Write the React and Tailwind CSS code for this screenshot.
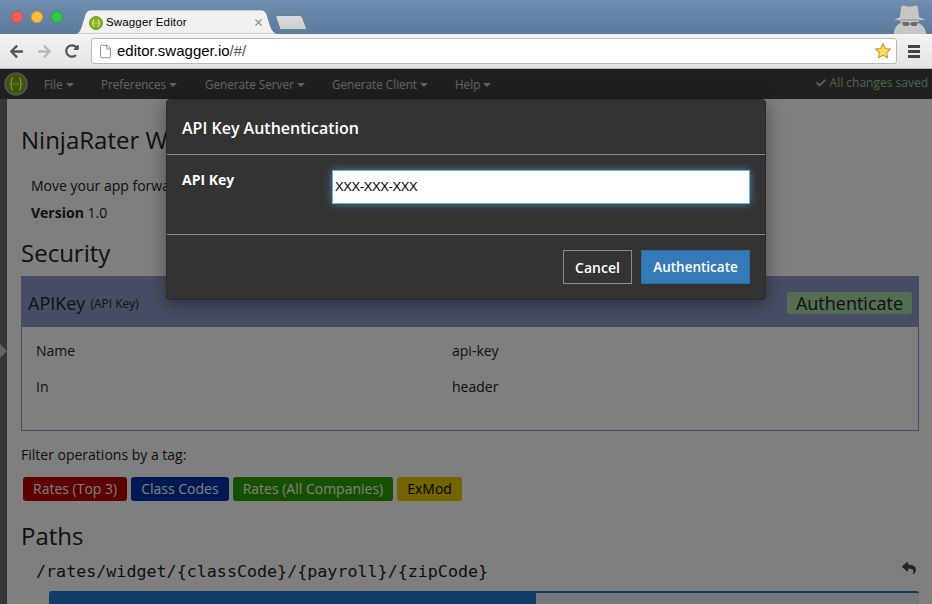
import React from 'react';
import { FaArrowLeft, FaArrowRight, FaCheck, FaReply, FaRedoAlt } from 'react-icons/fa';
import { File, X } from 'lucide-react';

const navItems = ['File', 'Preferences', 'Generate Server', 'Generate Client', 'Help'];
const navWidths = ['w-[57px]', 'w-[104px]', 'w-[127px]', 'w-[123px]', 'w-[60px]'];

const tags = [
    { name: 'Rates (Top 3)', color: 'bg-[#b80000] text-white' },
    { name: 'Class Codes', color: 'bg-[#0030a8] text-white' },
    { name: 'Rates (All Companies)', color: 'bg-[#28a000] text-white' },
    { name: 'ExMod', color: 'bg-[#e8c800] text-black' },
];

const SwaggerLogo = ({ size, ring, fill, text }) => (
    <svg width={size} height={size} viewBox="0 0 24 24">
        <circle cx="12" cy="12" r="11" fill={fill} stroke={ring} strokeWidth="1.6" />
        <path d="M9 6.5c-2 0-1.6 1.8-1.6 3.4 0 1.2-.6 2.1-1.4 2.1.8 0 1.4.9 1.4 2.1 0 1.6-.4 3.4 1.6 3.4M15 6.5c2 0 1.6 1.8 1.6 3.4 0 1.2.6 2.1 1.4 2.1-.8 0-1.4.9-1.4 2.1 0 1.6.4 3.4-1.6 3.4" fill="none" stroke={text} strokeWidth="1.3" />
        <circle cx="10" cy="12" r=".7" fill={text} />
        <circle cx="12" cy="12" r=".7" fill={text} />
        <circle cx="14" cy="12" r=".7" fill={text} />
    </svg>
);

const BrowserChrome = () => (
    <div className="shrink-0 font-['Liberation_Sans',sans-serif]">
        <div className="h-[34px] bg-gradient-to-b from-[#6f8dae] to-[#5b7b9d] flex relative">
            <div className="flex items-center gap-[8px] pl-[11px] h-[34px] w-[74px] pb-[1px]">
                <span className="w-[12px] h-[12px] rounded-full bg-[#fc5b57] border border-[#e0443e]" />
                <span className="w-[12px] h-[12px] rounded-full bg-[#fdbc40] border border-[#dea123]" />
                <span className="w-[12px] h-[12px] rounded-full bg-[#35c84a] border border-[#1aab29]" />
            </div>
            <div className="relative w-[206px] h-[24px] mt-[10px] flex items-center pl-[15px] pt-[1px]">
                <svg className="absolute inset-0" width="206" height="24" viewBox="0 0 206 24">
                    <path d="M0 24c5 0 6-3 8-9l3-10c1-3 3-5 6-5h170c3 0 5 2 6 5l3 10c2 6 4 9 10 9z" fill="#f1f1f1" stroke="#566b80" strokeWidth=".5" />
                </svg>
                <span className="relative mr-[3px]"><SwaggerLogo size={14} ring="#5c8a0c" fill="#84b81c" text="#ffffff" /></span>
                <span className="relative text-[11.5px] text-black tracking-[.15px]">Swagger Editor</span>
                <X className="absolute left-[179px] top-[7px] text-[#8a8a8a]" size={11} strokeWidth={2.5} />
            </div>
            <div className="w-[28px] h-[15px] mt-[15px] ml-[-3px] bg-gradient-to-b from-[#dcdcdc] to-[#cccccc] rounded-t-[3px] skew-x-[20deg] border border-[#6d7f90]" />
            <svg className="absolute right-[5px] top-[4px]" width="34" height="30" viewBox="0 0 34 30">
                <path d="M1 30c0-5 2-9 7-11l-1-3H1l6-3 1-9c0-2 2-3 4-2 3 1 6 1 9 0 2-1 4 0 4 2l1 9 6 3h-6l-1 3c5 2 8 6 8 11z" fill="#c6c6c6" />
                <path d="M8 15h18v2H8z" fill="#a8a8a8" />
                <path d="M9 18h6.500l1 1.500h1l1-1.500H25l-1.500 4h-4.500l-1.500-1.500h-1L15 22h-4.500z" fill="#6b6b6b" />
            </svg>
        </div>
        <div className="h-[35px] bg-gradient-to-b from-[#f4f4f4] to-[#e4e4e4] flex items-center border-b border-[#b5b5b5]">
            <FaArrowLeft className="ml-[9px] text-[#555]" size={15} />
            <FaArrowRight className="ml-[13px] text-[#b9b9b9]" size={15} />
            <FaRedoAlt className="ml-[13px] text-[#555]" size={14} />
            <div className="ml-[12px] w-[806px] h-[26px] bg-white border border-[#b8b8b8] rounded-[3px] flex items-center pl-[6px] pr-[4px]">
                <File className="text-[#888] shrink-0" size={15} strokeWidth={1.5} />
                <span className="ml-[4px] text-[15px] text-black">editor.swagger.io<span className="text-[#555]">/#/</span></span>
                <svg className="ml-auto" width="18" height="18" viewBox="0 0 24 24">
                    <path d="M12 2l3 6.6 7 .8-5.2 4.8 1.4 7L12 17.6l-6.2 3.6 1.4-7L2 9.4l7-.8z" fill="#fbdc68" stroke="#c9962a" strokeWidth="1.4" strokeLinejoin="round" />
                </svg>
            </div>
            <div className="ml-[11px] flex flex-col gap-[2px]">
                <span className="w-[12px] h-[3px] bg-[#444]" />
                <span className="w-[12px] h-[3px] bg-[#444]" />
                <span className="w-[12px] h-[3px] bg-[#444]" />
            </div>
        </div>
    </div>
);

const NavBar = () => (
    <div className="h-[30px] bg-[#414141] flex items-center shrink-0 text-[#c8c8c8] text-[11.7px]">
        <div className="ml-[4px] w-[40px]"><SwaggerLogo size={24} ring="#a8a8a8" fill="#7fb000" text="#ffffff" /></div>
        {navItems.map((item, i) => (
            <div key={item} className={`flex items-center gap-[3px] pt-[2px] ${navWidths[i]}`}>
                {item}
                <span className="w-0 h-0 border-x-[4px] border-x-transparent border-t-[4px] border-t-[#c8c8c8] mt-[1px]" />
            </div>
        ))}
        <div className="ml-auto mr-[4px] flex items-center gap-[4px] text-[#90d090] text-[12px] mb-[2px]">
            <FaCheck size={10} />
            All changes saved
        </div>
    </div>
);

const Sheet = () => (
    <div className="flex-1 flex min-h-0 bg-white text-[#222] text-[14px] font-['Open_Sans',sans-serif]">
        <div className="w-[7px] bg-[#646f76] relative shrink-0">
            <span className="absolute top-[245px] left-0 w-0 h-0 border-y-[7px] border-y-transparent border-l-[7px] border-l-[#c8c8c8]" />
        </div>
        <div className="flex-1 pl-[14px] pr-[13px] pt-[27px] min-w-0">
            <h1 className="text-[24px] leading-[28px] whitespace-nowrap">NinjaRater Widget API</h1>
            <p className="mt-[22px] ml-[10px] leading-[20px] whitespace-nowrap">Move your app forward with the NinjaRater API</p>
            <p className="mt-[7px] ml-[10px] leading-[20px]"><span className="font-bold">Version</span> 1.0</p>
            <h2 className="mt-[16px] text-[24px] leading-[28px]">Security</h2>
            <div className="mt-[9px] border border-[#8f9bc8] h-[155px]">
                <div className="h-[50px] bg-[#8f9bc8] flex items-center pl-[6px] pr-[6px] pt-[2px]">
                    <span className="text-[18px]">APIKey</span>
                    <span className="ml-[5px] text-[12px] mt-[2px]">(API Key)</span>
                    <span className="ml-auto bg-[#a8dca8] rounded-[3px] w-[125px] h-[22px] leading-[22px] text-center text-[18px]">Authenticate</span>
                </div>
                <div className="grid grid-cols-[416px_1fr] pl-[14px] pt-[14px] gap-y-[16px] leading-[20px]">
                    <span>Name</span><span>api-key</span>
                    <span>In</span><span>header</span>
                </div>
            </div>
            <p className="mt-[14px] leading-[20px]">Filter operations by a tag:</p>
            <div className="mt-[12px] ml-[2px] flex gap-[4px]">
                {tags.map((tag) => (
                    <span key={tag.name} className={`${tag.color} h-[24px] leading-[24px] px-[10px] rounded-[3px]`}>{tag.name}</span>
                ))}
            </div>
            <h2 className="mt-[19px] text-[24px] leading-[32px]">Paths</h2>
            <div className="mt-[7px] ml-[15px] flex items-center justify-between font-['DejaVu_Sans_Mono',monospace] text-[16.7px] leading-[24px]">
                /rates/widget/{'{classCode}'}/{'{payroll}'}/{'{zipCode}'}
                <FaReply className="text-[#3a4a5a] mr-[3px] mb-[6px]" size={14} />
            </div>
            <div className="mt-[8px] ml-[28px] h-[30px] bg-[#e8f0fa] border-t-2 border-[#1f78cc] rounded-t-[3px] overflow-hidden">
                <div className="w-[487px] h-full bg-[#1f78cc]" />
            </div>
        </div>
    </div>
);

const Modal = () => (
    <div className="absolute left-[166px] top-0 w-[600px] h-[201px] bg-[#333] rounded-[4px] border border-[#2a2a2a] shadow-[0_4px_18px_rgba(0,0,0,0.4)] text-white font-['Open_Sans',sans-serif] flex flex-col">
        <div className="h-[55px] border-b border-[#8a8a8a] flex items-center pl-[15px] pt-[2px] text-[16px] font-semibold">API Key Authentication</div>
        <div className="h-[80px] border-b border-[#8a8a8a] flex items-start pl-[15px] pt-[15px]">
            <label className="w-[150px] text-[14px] font-bold leading-[20px]">API Key</label>
            <div className="w-[418px] h-[34px] bg-white border border-[#66afe9] shadow-[0_0_8px_rgba(102,175,233,0.6)] flex items-center pl-[2px] text-black text-[13px] tracking-[-.4px] font-['Liberation_Sans',sans-serif]">XXX-XXX-XXX</div>
        </div>
        <div className="flex-1 flex justify-end items-start pt-[15px] pr-[15px] gap-[9px] text-[14px] font-semibold">
            <button className="w-[69px] h-[34px] border border-[#8a8a8a]">Cancel</button>
            <button className="w-[109px] h-[34px] bg-[#337ab7] border border-[#2e6da4] text-[13.5px] pt-[1px]">Authenticate</button>
        </div>
    </div>
);

const App = () => (
    <div className="w-[932px] h-[604px] overflow-hidden flex flex-col">
        <BrowserChrome />
        <div className="relative flex-1 flex flex-col min-h-0 font-['Open_Sans',sans-serif] overflow-hidden">
            <NavBar />
            <Sheet />
            <div className="absolute inset-0 bg-black/50" />
            <div className="absolute left-0 right-0 top-[30px]"><Modal /></div>
        </div>
    </div>
);

export default App;
